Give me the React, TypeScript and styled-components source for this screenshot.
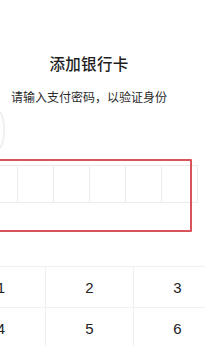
import React from 'react';
import styled, { createGlobalStyle } from 'styled-components';

const GlobalStyle = createGlobalStyle`
  html, body {
    margin: 0;
    padding: 0;
    background: #fff;
    overflow: hidden;
  }
  body {
    font-family: "Noto Sans CJK SC", "Noto Sans", sans-serif;
    color: #222;
  }
`;

const Page = styled.div`
  position: relative;
  width: 205px;
  height: 346px;
  overflow: hidden;
  background: #fff;
`;

const Screen = styled.div`
  width: 264px;
  margin-left: -43px;
  display: flex;
  flex-direction: column;
  align-items: center;
`;

const Title = styled.h1`
  margin: 52px 0 0;
  font-size: 15.5px;
  line-height: 22px;
  font-weight: 500;
  color: #1e1e1e;
  letter-spacing: 0.3px;
`;

const Subtitle = styled.p`
  margin: 15px 0 0;
  font-size: 12px;
  line-height: 16px;
  color: #2a2a2a;
`;

const PasswordSection = styled.div`
  position: relative;
  margin-top: 60px;
`;

const Boxes = styled.div`
  display: grid;
  grid-template-columns: repeat(6, 36px);
  height: 38px;
  border: 1px solid #ececec;
  box-sizing: border-box;
`;

const Box = styled.div<{ $first?: boolean }>`
  border-left: ${p => (p.$first ? 'none' : '1px solid #ececec')};
`;

const Annotation = styled.div`
  position: absolute;
  top: -6px;
  bottom: -29px;
  left: -30px;
  right: 6px;
  border: 2.5px solid #d6545a;
  border-radius: 1px;
  pointer-events: none;
`;

const Keypad = styled.div`
  margin-top: 63px;
  display: grid;
  grid-template-columns: repeat(3, 88px);
  grid-auto-rows: 41px;
  border-top: 1px solid #f0f0f0;
`;

const Key = styled.div<{ $col: number }>`
  display: flex;
  align-items: center;
  justify-content: center;
  font-family: "Liberation Sans", Arial, sans-serif;
  font-size: 15px;
  color: #222;
  border-bottom: 1px solid #f0f0f0;
  border-left: ${p => (p.$col === 0 ? 'none' : '1px solid #f0f0f0')};
`;

const EdgeShadow = styled.svg`
  position: absolute;
  left: 0;
  top: 110px;
`;

const keys = ['1', '2', '3', '4', '5', '6', '7', '8', '9'];

export default function App() {
  return (
    <>
      <GlobalStyle />
      <Page>
        <EdgeShadow width="8" height="40" viewBox="0 0 8 40">
          <path d="M0 2 C5 8 6 30 0 38" stroke="#f0f0f0" strokeWidth="2" fill="none" />
        </EdgeShadow>
        <Screen>
          <Title>添加银行卡</Title>
          <Subtitle>请输入支付密码，以验证身份</Subtitle>
          <PasswordSection>
            <Boxes>
              {Array.from({ length: 6 }).map((_, i) => (
                <Box key={i} $first={i === 0} />
              ))}
            </Boxes>
            <Annotation />
          </PasswordSection>
          <Keypad>
            {keys.map((k, i) => (
              <Key key={k} $col={i % 3}>
                {k}
              </Key>
            ))}
          </Keypad>
        </Screen>
      </Page>
    </>
  );
}
